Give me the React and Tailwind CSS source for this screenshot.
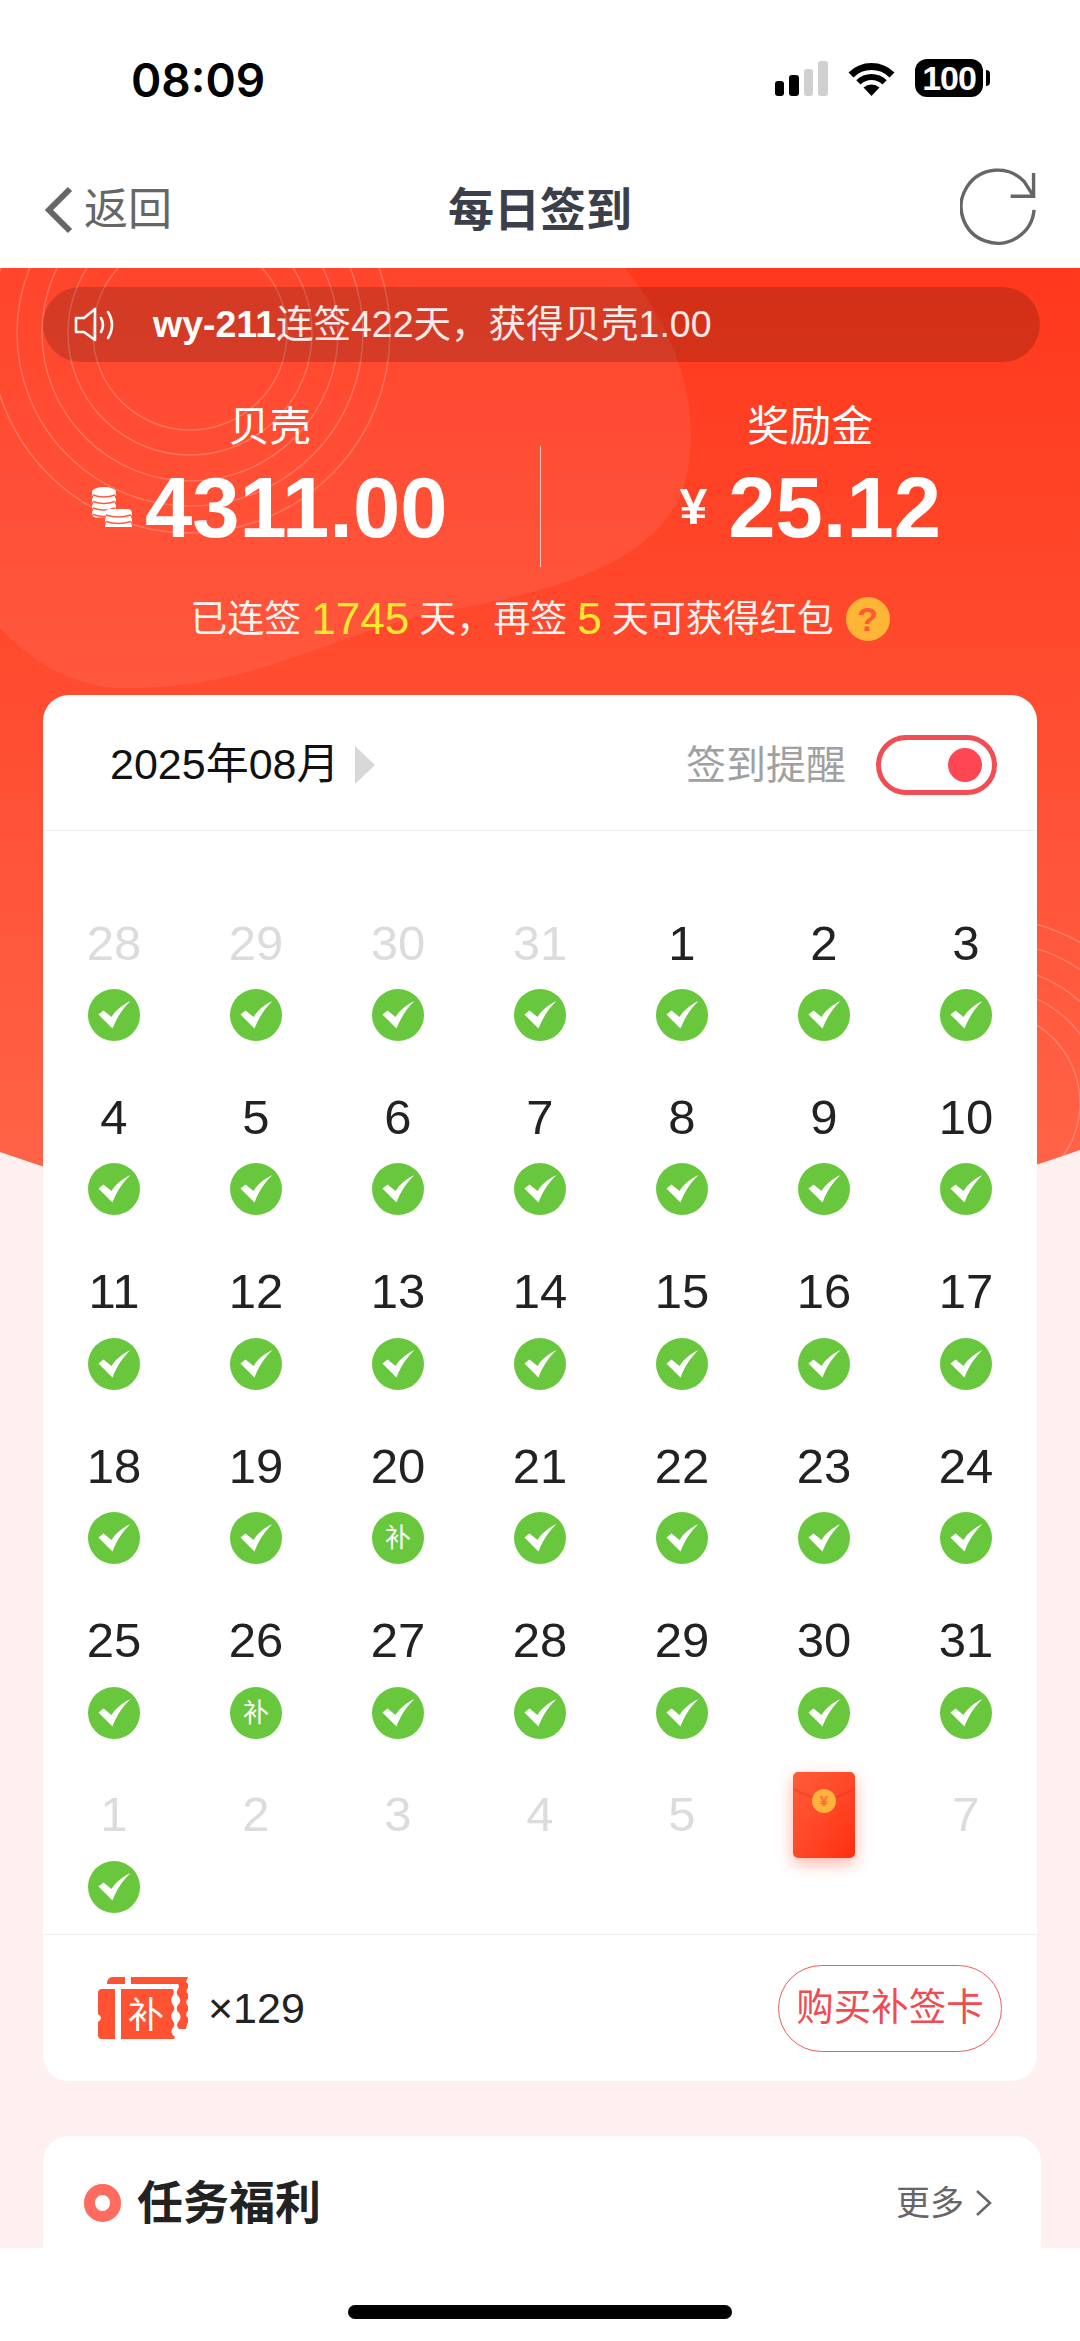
import React from "react";

function Check() {
  return (
    <svg width="52" height="52" viewBox="0 0 52 52">
      <circle cx="26" cy="26" r="26" fill="#68c73d" />
      <path d="M10.5 25.5 L15.5 21.5 L23.5 28 C28 21 34 16 42.5 12 C35 19 29 28 24.5 39.5 Z" fill="#fff" />
    </svg>
  );
}

function Bu() {
  return (
    <div className="w-[52px] h-[52px] rounded-full bg-[#68c73d] flex items-center justify-center text-white text-[26px] leading-none">补</div>
  );
}

function RedPacket() {
  return (
    <div className="relative shrink-0 w-[62px] h-[86px] rounded-[5px] bg-gradient-to-br from-[#ff5c38] to-[#ff2c0e] shadow-[0_6px_16px_rgba(255,70,40,0.4)]">
      <svg className="absolute inset-0" width="62" height="86" viewBox="0 0 62 86">
        <path d="M0 17 Q16 25 31 29 Q46 25 62 17" fill="none" stroke="#d9321a" strokeOpacity="0.35" strokeWidth="2" />
      </svg>
      <div className="absolute left-[19px] top-[17px] w-[24px] h-[24px] rounded-full bg-[#ffb23c] flex items-center justify-center text-[#ff6a3a] text-[15px] font-bold leading-none">¥</div>
    </div>
  );
}

const rows = [
  [[28, 1, "c"], [29, 1, "c"], [30, 1, "c"], [31, 1, "c"], [1, 0, "c"], [2, 0, "c"], [3, 0, "c"]],
  [[4, 0, "c"], [5, 0, "c"], [6, 0, "c"], [7, 0, "c"], [8, 0, "c"], [9, 0, "c"], [10, 0, "c"]],
  [[11, 0, "c"], [12, 0, "c"], [13, 0, "c"], [14, 0, "c"], [15, 0, "c"], [16, 0, "c"], [17, 0, "c"]],
  [[18, 0, "c"], [19, 0, "c"], [20, 0, "b"], [21, 0, "c"], [22, 0, "c"], [23, 0, "c"], [24, 0, "c"]],
  [[25, 0, "c"], [26, 0, "b"], [27, 0, "c"], [28, 0, "c"], [29, 0, "c"], [30, 0, "c"], [31, 0, "c"]],
  [[1, 1, "c"], [2, 1, ""], [3, 1, ""], [4, 1, ""], [5, 1, ""], [6, 1, "p"], [7, 1, ""]],
];

function Cell({ d }) {
  const [n, muted, kind] = d;
  return (
    <div className="h-[123px] flex flex-col items-center">
      <div className={`h-[50px] flex items-center justify-center text-[49px] leading-none ${muted ? "text-[#dcdcdc]" : "text-[#222222]"}`}>
        {kind === "p" ? <RedPacket /> : n}
      </div>
      {(kind === "c" || kind === "b") && (
        <div className="mt-[21px]">{kind === "c" ? <Check /> : <Bu />}</div>
      )}
    </div>
  );
}

function Background() {
  const tl = [97, 122, 148, 173, 200];
  const br = [92, 115, 137, 162, 185];
  return (
    <svg className="absolute left-0 top-0" width="1080" height="1000" viewBox="0 268 1080 1000">
      <defs>
        <linearGradient id="rg" x1="0" y1="0" x2="0" y2="1">
          <stop offset="0" stopColor="#ff381c" />
          <stop offset="0.5" stopColor="#ff4f33" />
          <stop offset="1" stopColor="#ff674b" />
        </linearGradient>
        <clipPath id="rc">
          <path d="M0 268 H1080 V1150 Q540 1341 0 1152 Z" />
        </clipPath>
      </defs>
      <path d="M0 268 H1080 V1150 Q540 1341 0 1152 Z" fill="url(#rg)" />
      <g clipPath="url(#rc)">
        <path d="M0 268 H625 C675 330 700 400 688 470 C672 560 560 590 450 610 C330 632 260 690 120 688 C70 686 30 660 0 628 Z" fill="#ffffff" fillOpacity="0.07" />
        <g fill="none" stroke="#ffffff" strokeOpacity="0.22" strokeWidth="1.5">
          {tl.map((r) => (
            <circle key={r} cx="190" cy="333" r={r} />
          ))}
          {br.map((r) => (
            <circle key={r} cx="988" cy="1103" r={r} />
          ))}
        </g>
      </g>
    </svg>
  );
}

function Speaker() {
  return (
    <svg width="43" height="36" viewBox="0 0 43 36" fill="none" stroke="#fff" strokeWidth="2.6" strokeLinejoin="round" strokeLinecap="round">
      <path d="M2 11 H10 L21 2 V33 L10 25 H2 Z" />
      <path d="M27 11 Q31 18 27 25" />
      <path d="M34 5 Q42 18 34 31" />
    </svg>
  );
}

function Coins() {
  const stack = (x, y, w, n) => {
    const out = [];
    for (let i = n - 1; i >= 0; i--) {
      const cy = y + i * 6.5;
      out.push(
        <g key={`${x}-${i}`}>
          <rect x={x} y={cy} width={w} height="9" rx="4.5" fill="#fff" />
          <path d={`M${x + 1} ${cy + 6} Q${x + w / 2} ${cy + 10} ${x + w - 1} ${cy + 6}`} fill="none" stroke="#ff5a3c" strokeWidth="1.4" />
        </g>
      );
    }
    return out;
  };
  return (
    <svg width="40" height="40" viewBox="0 0 40 40">
      <ellipse cx="12" cy="5" rx="12" ry="5" fill="#fff" />
      {stack(0, 2, 24, 4)}
      {stack(13, 22, 27, 3)}
    </svg>
  );
}

function Ticket() {
  return (
    <svg width="90" height="62" viewBox="0 0 90 62">
      <g fill="#ff5233">
        <path d="M9 7 Q9 0 15 0 H27 V7 Z" />
        <path d="M33 0 H90 L88 5 Q92 8 90 11 Q87 14 90 17 Q92 20 89 23 Q87 26 90 29 Q92 32 89 35 Q87 38 90 41 Q92 44 89 47 L88 52 H81 Q77 48 81 44 Q84 40 81 36 Q77 32 80 28 Q84 24 81 20 Q77 16 80 12 Q82 9 80 7 H33 Z" />
        <path d="M4 12 H17 V62 H4 Q0 62 0 58 V45 Q6 41 0 37 V16 Q0 12 4 12 Z" />
        <path d="M23 12 H75 Q77 16 74 20 Q72 24 75 28 Q78 32 74 36 Q72 40 75 44 Q78 48 74 52 Q72 56 77 60 L76 62 H23 Z" />
      </g>
      <text x="48" y="51" textAnchor="middle" fill="#fff" fontSize="36" fontFamily="'Noto Sans CJK SC', sans-serif">补</text>
    </svg>
  );
}

export default function App() {
  return (
    <div className="w-[1080px] h-[2341px] bg-white overflow-hidden flex flex-col font-['Liberation_Sans','Noto_Sans_CJK_SC',sans-serif]">
      {/* status bar */}
      <div className="h-[130px] shrink-0 flex items-start justify-between pt-[53px] pl-[131px] pr-[90px]">
        <span className="font-['Inter',sans-serif] text-[46px] font-semibold leading-[54px] text-black">08:09</span>
        <div className="flex items-start gap-[20px] pt-[8px]">
          <div className="flex items-end gap-[5px] h-[35px]">
            <div className="w-[9px] h-[15px] rounded-[3px] bg-black" />
            <div className="w-[10px] h-[21px] rounded-[3px] bg-black" />
            <div className="w-[9px] h-[27px] rounded-[3px] bg-[#d0d0d0]" />
            <div className="w-[10px] h-[35px] rounded-[3px] bg-[#d0d0d0]" />
          </div>
          <svg width="47" height="34" viewBox="0 0 47 34" className="mt-[1px]">
            <g fill="none" stroke="#000" strokeLinecap="butt">
              <path d="M3 13 A29 29 0 0 1 44 13" strokeWidth="7" />
              <path d="M10.4 20.4 A18.5 18.5 0 0 1 36.6 20.4" strokeWidth="6" />
            </g>
            <path d="M23.5 34 L15.5 25.5 A12 12 0 0 1 31.5 25.5 Z" fill="#000" />
          </svg>
          <div className="flex items-center gap-[3px] -mt-[2px]">
            <div className="w-[68px] h-[38px] rounded-[12px] bg-black text-white text-[34px] font-bold leading-none flex items-center justify-center tracking-[-1px]">100</div>
            <div className="w-[4px] h-[16px] rounded-r-full bg-black" />
          </div>
        </div>
      </div>

      {/* nav */}
      <div className="relative h-[138px] shrink-0 flex items-start justify-between pl-[43px] pr-[44px]">
        <div className="flex items-center gap-[10px] h-[50px] mt-[55px]">
          <svg width="31" height="48" viewBox="0 0 31 48" fill="none">
            <path d="M27 3 L6 24 L27 45" stroke="#666666" strokeWidth="6" />
          </svg>
          <span className="text-[44px] leading-none text-[#666666]">返回</span>
        </div>
        <div className="absolute left-0 right-0 top-[55px] flex justify-center pointer-events-none">
          <span className="text-[46px] leading-[50px] font-bold text-[#3a3f4a]">每日签到</span>
        </div>
        <svg width="76" height="80" viewBox="0 0 78 80" fill="none" stroke="#666666" strokeWidth="3.5" className="mt-[38px]">
          <path d="M76 42 A37.5 37.5 0 1 1 66 13 L75.5 28" />
          <path d="M75.5 4 V28 H52" />
        </svg>
      </div>

      {/* main */}
      <div className="relative flex-1 min-h-0 overflow-hidden bg-[#fff0f0]">
        <Background />
        <div className="relative flex flex-col">
          {/* notice */}
          <div className="mt-[19px] ml-[43px] w-[997px] h-[75px] rounded-full bg-black/[0.17] flex items-center pl-[31px] gap-[36px]">
            <Speaker />
            <div className="text-[37.5px] leading-none text-white/90 whitespace-nowrap">
              <span className="font-bold text-white">wy-211</span>连签422天，获得贝壳1.00
            </div>
          </div>

          {/* stats */}
          <div className="mt-[44px] h-[161px] flex items-start text-white">
            <div className="flex-1 flex flex-col items-center">
              <div className="h-[40px] mt-[1px] flex items-center text-[41px] leading-none">贝壳</div>
              <div className="mt-[18px] h-[84px] flex items-center gap-[13px]">
                <Coins />
                <span className="text-[85px] font-bold leading-none">4311.00</span>
              </div>
            </div>
            <div className="w-px h-[121px] mt-[40px] bg-white/70" />
            <div className="flex-1 flex flex-col items-center">
              <div className="h-[40px] mt-[1px] flex items-center text-[42px] leading-none">奖励金</div>
              <div className="mt-[18px] h-[84px] flex items-center gap-[21px]">
                <span className="text-[50px] font-bold leading-none">¥</span>
                <span className="text-[85px] font-bold leading-none">25.12</span>
              </div>
            </div>
          </div>

          {/* streak */}
          <div className="mt-[30px] h-[44px] flex items-center justify-center text-[37px] leading-none text-white/95">
            <span>已连签</span>
            <span className="text-[44px] text-[#ffe930] mx-[10px]">1745</span>
            <span>天，再签</span>
            <span className="text-[44px] text-[#ffe930] mx-[10px]">5</span>
            <span>天可获得红包</span>
            <div className="ml-[12px] w-[44px] h-[44px] rounded-full bg-[#ffb637] flex items-center justify-center text-[#ff5a30] text-[34px] font-bold leading-none">?</div>
          </div>

          {/* calendar card */}
          <div className="mt-[54px] ml-[43px] w-[994px] h-[1386px] rounded-[26px] bg-white flex flex-col">
            <div className="h-[136px] shrink-0 pt-[4px] border-b-[1.5px] border-[#eeeeee] flex items-center justify-between pl-[67px] pr-[40px]">
              <div className="flex items-center gap-[15px]">
                <span className="text-[43px] leading-none text-[#111111]">2025年08月</span>
                <svg width="20" height="38" viewBox="0 0 20 38"><path d="M0 0 L20 19 L0 38 Z" fill="#d8d8d8" /></svg>
              </div>
              <div className="flex items-center gap-[30px]">
                <span className="text-[40px] leading-none text-[#a0a0a0]">签到提醒</span>
                <div className="w-[121px] h-[60px] rounded-full border-[5px] border-[#f04d55] flex items-center justify-end pr-[10px]">
                  <div className="w-[34px] h-[34px] rounded-full bg-[#ff4754]" />
                </div>
              </div>
            </div>

            <div className="flex-1 min-h-0 pt-[87px] grid grid-cols-7 gap-y-[51.4px] content-start">
              {rows.flat().map((d, i) => (
                <Cell key={i} d={d} />
              ))}
            </div>

            <div className="h-[147px] shrink-0 border-t-[1.5px] border-[#eeeeee] flex items-center justify-between pl-[55px] pr-[35px]">
              <div className="flex items-center gap-[20px]">
                <Ticket />
                <span className="text-[43px] leading-none text-[#222222]">×129</span>
              </div>
              <div className="w-[224px] h-[87px] rounded-full border-[1.5px] border-[#ee5b5b] flex items-center justify-center text-[37.5px] leading-none text-[#f04b50]">购买补签卡</div>
            </div>
          </div>

          {/* tasks card */}
          <div className="mt-[55px] ml-[43px] w-[998px] h-[300px] rounded-[26px] bg-white">
            <div className="h-[134px] flex items-center justify-between pl-[41px] pr-[49px]">
              <div className="flex items-center gap-[16px]">
                <div className="w-[37px] h-[38px] rounded-full border-[11px] border-[#ff6b5e]" />
                <span className="text-[46px] leading-none font-bold text-[#222222]">任务福利</span>
              </div>
              <div className="flex items-center gap-[11px]">
                <span className="text-[34px] leading-none text-[#666666]">更多</span>
                <svg width="17" height="26" viewBox="0 0 17 26" fill="none"><path d="M2 1 L15 13 L2 25" stroke="#666666" strokeWidth="2.5" /></svg>
              </div>
            </div>
          </div>
        </div>
      </div>

      {/* home bar */}
      <div className="h-[93px] shrink-0 bg-white flex justify-center pt-[57px]">
        <div className="w-[384px] h-[14px] rounded-full bg-black" />
      </div>
    </div>
  );
}
